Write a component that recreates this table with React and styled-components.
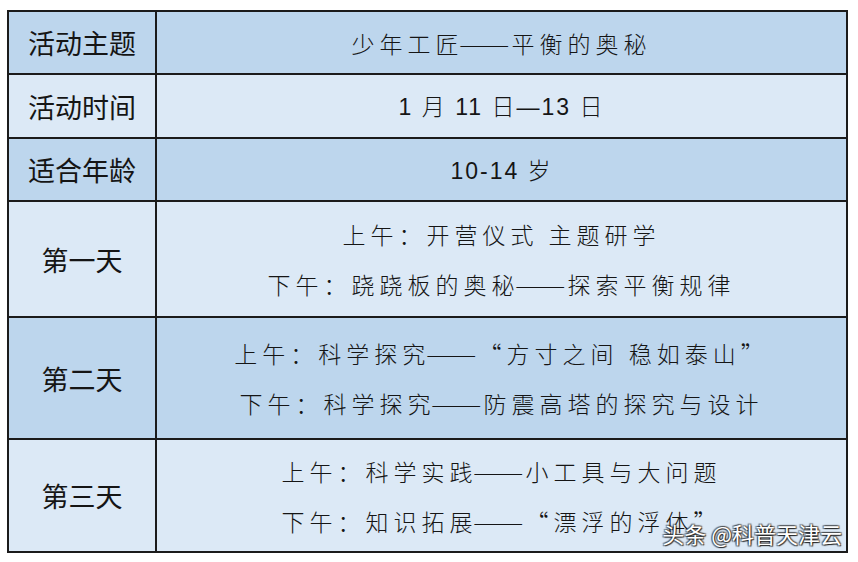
import React from "react";
import styled, { createGlobalStyle } from "styled-components";

const Global = createGlobalStyle`
  html, body { margin: 0; padding: 0; background: #ffffff; }
  body { font-family: "Noto Sans CJK SC", "Liberation Sans", sans-serif; color: #141414; }
`;

const Page = styled.div`
  position: relative;
  width: 858px;
  height: 562px;
  padding: 10px 0 0 7px;
  box-sizing: border-box;
  background: #ffffff;
`;

const Grid = styled.div`
  display: grid;
  grid-template-columns: 146px 689px;
  grid-template-rows: 61px 62px 61px 114px 120px 111px;
  gap: 2px;
  padding: 2px;
  width: 841px;
  box-sizing: border-box;
  background: #1b1b1b;
`;

const Cell = styled.div`
  background: ${(p) => (p.$dark ? "#bdd6ed" : "#dce9f6")};
  display: flex;
  flex-direction: column;
  align-items: center;
  justify-content: center;
`;

const Label = styled(Cell)`
  font-family: "Noto Sans CJK SC", sans-serif;
  font-size: 27px;
  font-weight: 400;
  color: #151515;
`;

const Content = styled(Cell)`
  font-family: ${(p) =>
    p.$num ? '"Liberation Sans", "Noto Sans CJK SC", sans-serif' : '"Noto Sans CJK SC", sans-serif'};
  font-size: 23px;
  font-weight: 300;
  letter-spacing: ${(p) => (p.$num ? "2px" : "5px")};
  color: #151515;
  padding-top: ${(p) => (p.$num ? "2px" : "0")};
`;

const Line = styled.div`
  line-height: 50px;
  white-space: nowrap;
`;

const Dash = styled.span`
  display: inline-block;
  letter-spacing: 0;
  transform: scaleX(1.32);
  transform-origin: left center;
  margin-left: -4px;
  margin-right: 14px;
`;

const Watermark = styled.div`
  position: absolute;
  right: 16px;
  top: 518px;
  font-family: "Noto Sans CJK SC", sans-serif;
  font-size: 22px;
  line-height: 30px;
  color: #ffffff;
  white-space: nowrap;
  text-shadow: 0 0 1px #333, 1px 1px 1px rgba(0, 0, 0, 0.75), -1px -1px 1px rgba(0, 0, 0, 0.45),
    1px -1px 1px rgba(0, 0, 0, 0.45), -1px 1px 1px rgba(0, 0, 0, 0.45);
`;

const rows = [
  { label: "活动主题", dark: true, lines: [["少年工匠", "平衡的奥秘"]] },
  { label: "活动时间", dark: false, num: true, lines: [["1 月 11 日—13 日"]] },
  { label: "适合年龄", dark: true, num: true, lines: [["10-14 岁"]] },
  {
    label: "第一天",
    dark: false,
    lines: [["上午：开营仪式 主题研学"], ["下午：跷跷板的奥秘", "探索平衡规律"]],
  },
  {
    label: "第二天",
    dark: true,
    lines: [["上午：科学探究", "“方寸之间 稳如泰山”"], ["下午：科学探究", "防震高塔的探究与设计"]],
  },
  {
    label: "第三天",
    dark: false,
    lines: [["上午：科学实践", "小工具与大问题"], ["下午：知识拓展", "“漂浮的浮体”"]],
  },
];

export default function App() {
  return (
    <>
      <Global />
      <Page>
        <Grid>
          {rows.map((r) => (
            <React.Fragment key={r.label}>
              <Label $dark={r.dark}>{r.label}</Label>
              <Content $dark={r.dark} $num={r.num}>
                {r.lines.map((parts, i) => (
                  <Line key={i}>
                    {parts.length === 2 ? (
                      <>
                        {parts[0]}
                        <Dash>——</Dash>
                        {parts[1]}
                      </>
                    ) : (
                      parts[0]
                    )}
                  </Line>
                ))}
              </Content>
            </React.Fragment>
          ))}
        </Grid>
        <Watermark>头条 @科普天津云</Watermark>
      </Page>
    </>
  );
}
